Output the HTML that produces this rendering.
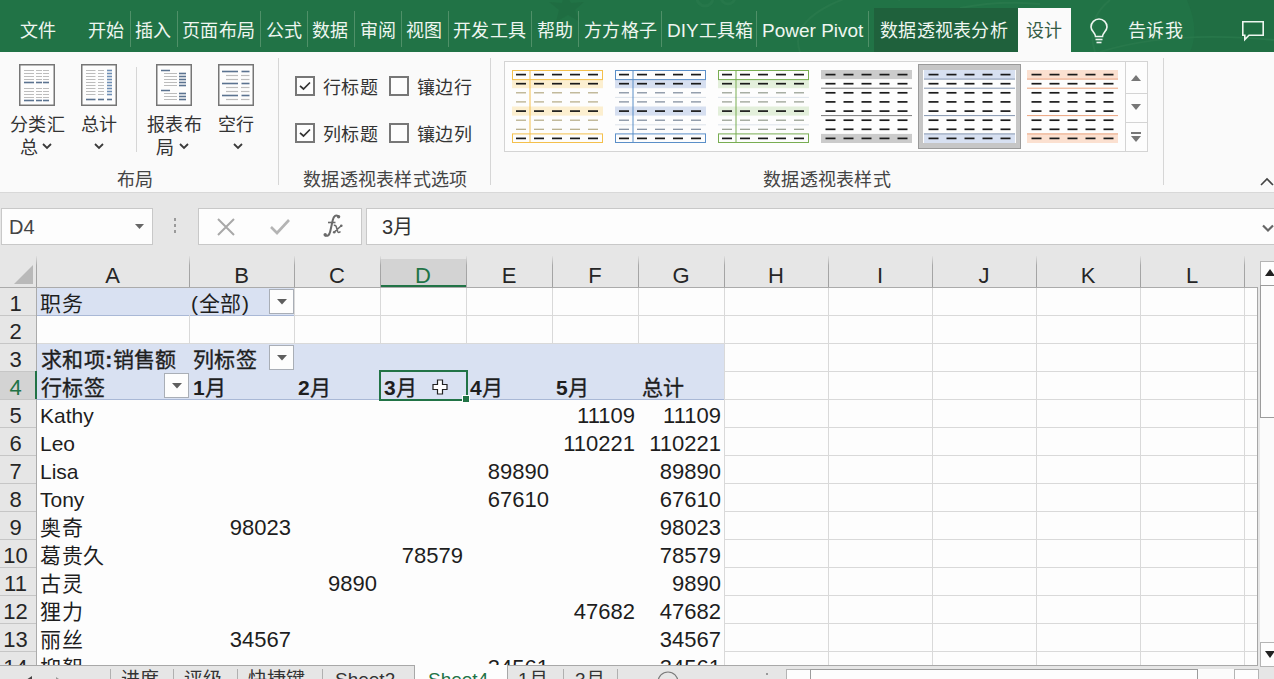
<!DOCTYPE html><html lang="zh-CN"><head><meta charset="utf-8"><title>Excel</title><style>
*{margin:0;padding:0;box-sizing:border-box}
html,body{width:1274px;height:679px;overflow:hidden;background:#fdfdfd;font-family:"Liberation Sans",sans-serif;color:#222}
div,span{position:absolute;white-space:nowrap}
span.i{position:static}
.tab{top:19px;font-size:18px;line-height:24px;letter-spacing:0.3px;color:#eef6f0}
.lat{position:static;font-size:19px;letter-spacing:0}
.tsep{top:11px;width:1px;height:36px;background:#4f9068}
.rl{font-size:18px;line-height:22px;letter-spacing:0.3px;color:#333}
.gl{font-size:18px;line-height:22px;letter-spacing:0.3px;color:#444}
.gsep{width:1px;background:#d6d6d6}
.ch{top:259px;height:28px;font-size:22px;line-height:33px;text-align:center;color:#262626}
.rh{left:0;width:31px;height:28px;font-size:22px;line-height:33px;text-align:center;color:#262626}
.c{font-size:21px;line-height:33px;height:28px;color:#1e1e1e;top:0}
.cj{letter-spacing:0.7px}
.num{font-size:22px}
.b{font-weight:bold}
.bm{font-weight:500;-webkit-text-stroke:0.35px #1e1e1e;letter-spacing:0.4px}
.bd{position:static;font-weight:bold}
svg{position:absolute;overflow:visible}
</style></head><body>
<div style="left:0;top:0;width:1274px;height:52px;background:#217346;overflow:hidden">
<svg width="1274" height="52" style="left:0;top:0" viewBox="0 0 1274 52"><polygon points="565,-8 571,3 584,2 575,10 580,22 568,15 556,22 559,10 549,2 562,3" fill="#1f6b40" opacity="0.7"/><circle cx="705" cy="-2" r="8" fill="none" stroke="#2a7a4c" stroke-width="3" opacity="0.6"/><circle cx="728" cy="-3" r="7" fill="none" stroke="#2a7a4c" stroke-width="3" opacity="0.6"/><path d="M1187 0 Q1200 30 1190 52 L1274 52 L1274 0 Z" fill="#1f6a41" opacity="0.6"/><g fill="none" stroke="#2b7b4e" stroke-width="2" opacity="0.7"><path d="M800 52 Q790 25 830 5 T900 0"/><path d="M1095 52 Q1085 20 1110 0"/><path d="M1100 52 Q1170 30 1274 40"/><path d="M960 8 Q1000 0 1040 4"/></g></svg>
<div class="tsep" style="left:130px"></div>
<div class="tsep" style="left:177px"></div>
<div class="tsep" style="left:260px"></div>
<div class="tsep" style="left:307px"></div>
<div class="tsep" style="left:354px"></div>
<div class="tsep" style="left:401px"></div>
<div class="tsep" style="left:448px"></div>
<div class="tsep" style="left:531px"></div>
<div class="tsep" style="left:578px"></div>
<div class="tsep" style="left:661px"></div>
<div class="tsep" style="left:756px"></div>
<div class="tsep" style="left:868px"></div>
<div class="tab" style="left:20px">文件</div>
<div class="tab" style="left:88px">开始</div>
<div class="tab" style="left:135px">插入</div>
<div class="tab" style="left:182px">页面布局</div>
<div class="tab" style="left:266px">公式</div>
<div class="tab" style="left:312px">数据</div>
<div class="tab" style="left:360px">审阅</div>
<div class="tab" style="left:406px">视图</div>
<div class="tab" style="left:453px">开发工具</div>
<div class="tab" style="left:537px">帮助</div>
<div class="tab" style="left:584px">方方格子</div>
<div class="tab" style="left:667px"><span class="lat">DIY</span><span class="i">工具箱</span></div>
<div class="tab" style="left:762px;font-size:19px;letter-spacing:0">Power Pivot</div>
<div style="left:874px;top:8px;width:144px;height:44px;background:#1f613c"></div>
<div class="tab" style="left:880px">数据透视表分析</div>
<div style="left:1018px;top:8px;width:53px;height:44px;background:#fafafa"></div>
<div class="tab" style="left:1026px;color:#355c45">设计</div>
<div class="tab" style="left:1128px">告诉我</div>
<svg width="20" height="26" style="left:1089px;top:19px" viewBox="0 0 20 26"><path d="M6.5 17.5 C6.5 14 2 12 2 8 A8 8 0 0 1 18 8 C18 12 13.5 14 13.5 17.5 Z" fill="none" stroke="#eef6f0" stroke-width="1.6"/><line x1="6.5" y1="20.5" x2="13.5" y2="20.5" stroke="#eef6f0" stroke-width="1.6"/><line x1="7.5" y1="23.5" x2="12.5" y2="23.5" stroke="#eef6f0" stroke-width="1.6"/></svg>
<svg width="24" height="22" style="left:1241px;top:20px" viewBox="0 0 24 22"><path d="M1.8 1.8 H22.2 V15.2 H8 L3.8 19.6 V15.2 H1.8 Z" fill="none" stroke="#eef6f0" stroke-width="1.6" stroke-linejoin="miter"/></svg>
</div>
<div style="left:0;top:52px;width:1274px;height:140px;background:#fafafa"></div>
<svg width="36" height="42" style="left:19px;top:64px" viewBox="0 0 36 42"><rect x="0.75" y="0.75" width="34.5" height="40.5" fill="#fdfdfd" stroke="#767676" stroke-width="1.5"/><line x1="5" y1="6.5" x2="15" y2="6.5" stroke="#bcbcbc" stroke-width="1"/><line x1="17" y1="6.5" x2="23" y2="6.5" stroke="#bcbcbc" stroke-width="1"/><line x1="24" y1="6.5" x2="30" y2="6.5" stroke="#bcbcbc" stroke-width="1"/><line x1="5" y1="9.5" x2="15" y2="9.5" stroke="#bcbcbc" stroke-width="1"/><line x1="17" y1="9.5" x2="23" y2="9.5" stroke="#bcbcbc" stroke-width="1"/><line x1="24" y1="9.5" x2="30" y2="9.5" stroke="#bcbcbc" stroke-width="1"/><line x1="5" y1="12.5" x2="15" y2="12.5" stroke="#bcbcbc" stroke-width="1"/><line x1="17" y1="12.5" x2="23" y2="12.5" stroke="#bcbcbc" stroke-width="1"/><line x1="24" y1="12.5" x2="30" y2="12.5" stroke="#bcbcbc" stroke-width="1"/><line x1="5" y1="15.5" x2="15" y2="15.5" stroke="#bcbcbc" stroke-width="1"/><line x1="17" y1="15.5" x2="23" y2="15.5" stroke="#bcbcbc" stroke-width="1"/><line x1="24" y1="15.5" x2="30" y2="15.5" stroke="#bcbcbc" stroke-width="1"/><line x1="5" y1="18.5" x2="15" y2="18.5" stroke="#5b7390" stroke-width="1.6"/><line x1="17" y1="18.5" x2="23" y2="18.5" stroke="#5b7390" stroke-width="1.6"/><line x1="24" y1="18.5" x2="30" y2="18.5" stroke="#5b7390" stroke-width="1.6"/><line x1="5" y1="24.5" x2="15" y2="24.5" stroke="#bcbcbc" stroke-width="1"/><line x1="17" y1="24.5" x2="23" y2="24.5" stroke="#bcbcbc" stroke-width="1"/><line x1="24" y1="24.5" x2="30" y2="24.5" stroke="#bcbcbc" stroke-width="1"/><line x1="5" y1="27.5" x2="15" y2="27.5" stroke="#bcbcbc" stroke-width="1"/><line x1="17" y1="27.5" x2="23" y2="27.5" stroke="#bcbcbc" stroke-width="1"/><line x1="24" y1="27.5" x2="30" y2="27.5" stroke="#bcbcbc" stroke-width="1"/><line x1="5" y1="30.5" x2="15" y2="30.5" stroke="#bcbcbc" stroke-width="1"/><line x1="17" y1="30.5" x2="23" y2="30.5" stroke="#bcbcbc" stroke-width="1"/><line x1="24" y1="30.5" x2="30" y2="30.5" stroke="#bcbcbc" stroke-width="1"/><line x1="5" y1="33.5" x2="15" y2="33.5" stroke="#bcbcbc" stroke-width="1"/><line x1="17" y1="33.5" x2="23" y2="33.5" stroke="#bcbcbc" stroke-width="1"/><line x1="24" y1="33.5" x2="30" y2="33.5" stroke="#bcbcbc" stroke-width="1"/><line x1="5" y1="36.5" x2="15" y2="36.5" stroke="#5b7390" stroke-width="1.6"/><line x1="17" y1="36.5" x2="23" y2="36.5" stroke="#5b7390" stroke-width="1.6"/><line x1="24" y1="36.5" x2="30" y2="36.5" stroke="#5b7390" stroke-width="1.6"/></svg>
<svg width="36" height="42" style="left:81px;top:64px" viewBox="0 0 36 42"><rect x="0.75" y="0.75" width="34.5" height="40.5" fill="#fdfdfd" stroke="#767676" stroke-width="1.5"/><line x1="5" y1="6.5" x2="14.5" y2="6.5" stroke="#bcbcbc" stroke-width="1"/><line x1="17" y1="6.5" x2="23" y2="6.5" stroke="#bcbcbc" stroke-width="1"/><line x1="26" y1="6.5" x2="31" y2="6.5" stroke="#6f8fb5" stroke-width="1.6"/><line x1="5" y1="9.5" x2="14.5" y2="9.5" stroke="#bcbcbc" stroke-width="1"/><line x1="17" y1="9.5" x2="23" y2="9.5" stroke="#bcbcbc" stroke-width="1"/><line x1="26" y1="9.5" x2="31" y2="9.5" stroke="#6f8fb5" stroke-width="1.6"/><line x1="5" y1="12.5" x2="14.5" y2="12.5" stroke="#bcbcbc" stroke-width="1"/><line x1="17" y1="12.5" x2="23" y2="12.5" stroke="#bcbcbc" stroke-width="1"/><line x1="26" y1="12.5" x2="31" y2="12.5" stroke="#6f8fb5" stroke-width="1.6"/><line x1="5" y1="15.5" x2="14.5" y2="15.5" stroke="#bcbcbc" stroke-width="1"/><line x1="17" y1="15.5" x2="23" y2="15.5" stroke="#bcbcbc" stroke-width="1"/><line x1="26" y1="15.5" x2="31" y2="15.5" stroke="#6f8fb5" stroke-width="1.6"/><line x1="5" y1="18.5" x2="14.5" y2="18.5" stroke="#bcbcbc" stroke-width="1"/><line x1="17" y1="18.5" x2="23" y2="18.5" stroke="#bcbcbc" stroke-width="1"/><line x1="26" y1="18.5" x2="31" y2="18.5" stroke="#6f8fb5" stroke-width="1.6"/><line x1="5" y1="21.5" x2="14.5" y2="21.5" stroke="#bcbcbc" stroke-width="1"/><line x1="17" y1="21.5" x2="23" y2="21.5" stroke="#bcbcbc" stroke-width="1"/><line x1="26" y1="21.5" x2="31" y2="21.5" stroke="#6f8fb5" stroke-width="1.6"/><line x1="5" y1="24.5" x2="14.5" y2="24.5" stroke="#bcbcbc" stroke-width="1"/><line x1="17" y1="24.5" x2="23" y2="24.5" stroke="#bcbcbc" stroke-width="1"/><line x1="26" y1="24.5" x2="31" y2="24.5" stroke="#6f8fb5" stroke-width="1.6"/><line x1="5" y1="27.5" x2="14.5" y2="27.5" stroke="#bcbcbc" stroke-width="1"/><line x1="17" y1="27.5" x2="23" y2="27.5" stroke="#bcbcbc" stroke-width="1"/><line x1="26" y1="27.5" x2="31" y2="27.5" stroke="#6f8fb5" stroke-width="1.6"/><line x1="5" y1="30.5" x2="14.5" y2="30.5" stroke="#bcbcbc" stroke-width="1"/><line x1="17" y1="30.5" x2="23" y2="30.5" stroke="#bcbcbc" stroke-width="1"/><line x1="26" y1="30.5" x2="31" y2="30.5" stroke="#6f8fb5" stroke-width="1.6"/><line x1="5" y1="35.5" x2="14.5" y2="35.5" stroke="#5b7390" stroke-width="1.6"/><line x1="17" y1="35.5" x2="23" y2="35.5" stroke="#5b7390" stroke-width="1.6"/><line x1="26" y1="35.5" x2="31" y2="35.5" stroke="#5b7390" stroke-width="1.6"/></svg>
<svg width="36" height="42" style="left:156px;top:64px" viewBox="0 0 36 42"><rect x="0.75" y="0.75" width="34.5" height="40.5" fill="#fdfdfd" stroke="#767676" stroke-width="1.5"/><line x1="5" y1="6.5" x2="14" y2="6.5" stroke="#5b7390" stroke-width="1.5"/><line x1="8" y1="9.5" x2="21" y2="9.5" stroke="#bcbcbc" stroke-width="1"/><line x1="23" y1="9.5" x2="30" y2="9.5" stroke="#5b7390" stroke-width="1.6"/><line x1="8" y1="12.5" x2="21" y2="12.5" stroke="#bcbcbc" stroke-width="1"/><line x1="23" y1="12.5" x2="30" y2="12.5" stroke="#5b7390" stroke-width="1.6"/><line x1="8" y1="15.5" x2="21" y2="15.5" stroke="#bcbcbc" stroke-width="1"/><line x1="23" y1="15.5" x2="30" y2="15.5" stroke="#5b7390" stroke-width="1.6"/><line x1="8" y1="18.5" x2="21" y2="18.5" stroke="#bcbcbc" stroke-width="1"/><line x1="23" y1="18.5" x2="30" y2="18.5" stroke="#5b7390" stroke-width="1.6"/><line x1="8" y1="21.5" x2="21" y2="21.5" stroke="#bcbcbc" stroke-width="1"/><line x1="23" y1="21.5" x2="30" y2="21.5" stroke="#5b7390" stroke-width="1.6"/><line x1="5" y1="26.5" x2="14" y2="26.5" stroke="#5b7390" stroke-width="1.5"/><line x1="8" y1="29.5" x2="21" y2="29.5" stroke="#bcbcbc" stroke-width="1"/><line x1="23" y1="29.5" x2="30" y2="29.5" stroke="#5b7390" stroke-width="1.6"/><line x1="8" y1="32.5" x2="21" y2="32.5" stroke="#bcbcbc" stroke-width="1"/><line x1="23" y1="32.5" x2="30" y2="32.5" stroke="#5b7390" stroke-width="1.6"/><line x1="8" y1="35.5" x2="21" y2="35.5" stroke="#bcbcbc" stroke-width="1"/><line x1="23" y1="35.5" x2="30" y2="35.5" stroke="#5b7390" stroke-width="1.6"/></svg>
<svg width="36" height="42" style="left:218px;top:64px" viewBox="0 0 36 42"><rect x="0.75" y="0.75" width="34.5" height="40.5" fill="#fdfdfd" stroke="#767676" stroke-width="1.5"/><line x1="4" y1="7.5" x2="20" y2="7.5" stroke="#5b7390" stroke-width="1.6"/><line x1="23.5" y1="7.5" x2="31.5" y2="7.5" stroke="#5b7390" stroke-width="1.6"/><line x1="8" y1="11.5" x2="20" y2="11.5" stroke="#bcbcbc" stroke-width="1.2"/><line x1="23" y1="11.5" x2="31.5" y2="11.5" stroke="#bcbcbc" stroke-width="1.2"/><line x1="8" y1="15.5" x2="20" y2="15.5" stroke="#bcbcbc" stroke-width="1.2"/><line x1="23" y1="15.5" x2="31.5" y2="15.5" stroke="#bcbcbc" stroke-width="1.2"/><line x1="4" y1="19.5" x2="20" y2="19.5" stroke="#5b7390" stroke-width="1.6"/><line x1="23.5" y1="19.5" x2="31.5" y2="19.5" stroke="#5b7390" stroke-width="1.6"/><line x1="8" y1="23.5" x2="20" y2="23.5" stroke="#bcbcbc" stroke-width="1.2"/><line x1="23" y1="23.5" x2="31.5" y2="23.5" stroke="#bcbcbc" stroke-width="1.2"/><line x1="8" y1="27.5" x2="20" y2="27.5" stroke="#bcbcbc" stroke-width="1.2"/><line x1="23" y1="27.5" x2="31.5" y2="27.5" stroke="#bcbcbc" stroke-width="1.2"/><line x1="4" y1="31.5" x2="20" y2="31.5" stroke="#5b7390" stroke-width="1.6"/><line x1="23.5" y1="31.5" x2="31.5" y2="31.5" stroke="#5b7390" stroke-width="1.6"/><line x1="8" y1="35.5" x2="20" y2="35.5" stroke="#bcbcbc" stroke-width="1.2"/><line x1="23" y1="35.5" x2="31.5" y2="35.5" stroke="#bcbcbc" stroke-width="1.2"/></svg>
<div class="rl" style="left:10px;top:114px">分类汇</div>
<div class="rl" style="left:20px;top:137px">总</div>
<svg width="10" height="7" style="left:42px;top:143px" viewBox="0 0 10 7"><polyline points="1,1 5.0,5 9,1" fill="none" stroke="#3a3a3a" stroke-width="1.8"/></svg>
<div class="rl" style="left:81px;top:114px">总计</div>
<svg width="10" height="7" style="left:94px;top:143px" viewBox="0 0 10 7"><polyline points="1,1 5.0,5 9,1" fill="none" stroke="#3a3a3a" stroke-width="1.8"/></svg>
<div class="gsep" style="left:136px;top:67px;height:85px"></div>
<div class="rl" style="left:147px;top:114px">报表布</div>
<div class="rl" style="left:156px;top:137px">局</div>
<svg width="10" height="7" style="left:179px;top:143px" viewBox="0 0 10 7"><polyline points="1,1 5.0,5 9,1" fill="none" stroke="#3a3a3a" stroke-width="1.8"/></svg>
<div class="rl" style="left:218px;top:114px">空行</div>
<svg width="10" height="7" style="left:233px;top:143px" viewBox="0 0 10 7"><polyline points="1,1 5.0,5 9,1" fill="none" stroke="#3a3a3a" stroke-width="1.8"/></svg>
<div class="gl" style="left:117px;top:169px">布局</div>
<div class="gsep" style="left:278px;top:58px;height:127px"></div>
<svg width="20" height="20" style="left:295px;top:76px" viewBox="0 0 20 20"><rect x="1" y="1" width="18" height="18" fill="#fdfdfd" stroke="#777" stroke-width="2"/><polyline points="5,9.8 8.5,13 15,6.5" fill="none" stroke="#333" stroke-width="1.7"/></svg>
<div class="rl" style="left:323px;top:77px">行标题</div>
<svg width="20" height="20" style="left:389px;top:76px" viewBox="0 0 20 20"><rect x="1" y="1" width="18" height="18" fill="#fdfdfd" stroke="#777" stroke-width="2"/></svg>
<div class="rl" style="left:417px;top:77px">镶边行</div>
<svg width="20" height="20" style="left:295px;top:123px" viewBox="0 0 20 20"><rect x="1" y="1" width="18" height="18" fill="#fdfdfd" stroke="#777" stroke-width="2"/><polyline points="5,9.8 8.5,13 15,6.5" fill="none" stroke="#333" stroke-width="1.7"/></svg>
<div class="rl" style="left:323px;top:124px">列标题</div>
<svg width="20" height="20" style="left:389px;top:123px" viewBox="0 0 20 20"><rect x="1" y="1" width="18" height="18" fill="#fdfdfd" stroke="#777" stroke-width="2"/></svg>
<div class="rl" style="left:417px;top:124px">镶边列</div>
<div class="gl" style="left:303px;top:169px">数据透视表样式选项</div>
<div class="gsep" style="left:490px;top:58px;height:127px"></div>
<div style="left:504px;top:61px;width:644px;height:91px;border:1px solid #d4d4d4;background:#fdfdfd"></div>
<svg width="91" height="73" style="left:512px;top:70px" viewBox="0 0 91 73"><rect x="0" y="9.1" width="91" height="9.1" fill="#fcefd0"/><rect x="0" y="36.5" width="91" height="9.1" fill="#fcefd0"/><rect x="0.5" y="0.5" width="90" height="9.1" fill="none" stroke="#f4c04c" stroke-width="1"/><rect x="0.5" y="63.9" width="90" height="8.6" fill="none" stroke="#f4c04c" stroke-width="1"/><line x1="18" y1="0" x2="18" y2="73" stroke="#f4c04c" stroke-width="1"/><line x1="4" y1="4.6" x2="14" y2="4.6" stroke="#1a1a1a" stroke-width="1.7"/><line x1="22" y1="4.6" x2="32" y2="4.6" stroke="#1a1a1a" stroke-width="1.7"/><line x1="40" y1="4.6" x2="50" y2="4.6" stroke="#1a1a1a" stroke-width="1.7"/><line x1="58" y1="4.6" x2="68" y2="4.6" stroke="#1a1a1a" stroke-width="1.7"/><line x1="76" y1="4.6" x2="86" y2="4.6" stroke="#1a1a1a" stroke-width="1.7"/><line x1="4" y1="13.7" x2="14" y2="13.7" stroke="#1a1a1a" stroke-width="1.7"/><line x1="22" y1="13.7" x2="32" y2="13.7" stroke="#1a1a1a" stroke-width="1.7"/><line x1="40" y1="13.7" x2="50" y2="13.7" stroke="#1a1a1a" stroke-width="1.7"/><line x1="58" y1="13.7" x2="68" y2="13.7" stroke="#1a1a1a" stroke-width="1.7"/><line x1="76" y1="13.7" x2="86" y2="13.7" stroke="#1a1a1a" stroke-width="1.7"/><line x1="4" y1="22.8" x2="14" y2="22.8" stroke="#b3a983" stroke-width="1.2"/><line x1="22" y1="22.8" x2="32" y2="22.8" stroke="#b3a983" stroke-width="1.2"/><line x1="40" y1="22.8" x2="50" y2="22.8" stroke="#b3a983" stroke-width="1.2"/><line x1="58" y1="22.8" x2="68" y2="22.8" stroke="#b3a983" stroke-width="1.2"/><line x1="76" y1="22.8" x2="86" y2="22.8" stroke="#b3a983" stroke-width="1.2"/><line x1="4" y1="31.9" x2="14" y2="31.9" stroke="#b3a983" stroke-width="1.2"/><line x1="22" y1="31.9" x2="32" y2="31.9" stroke="#b3a983" stroke-width="1.2"/><line x1="40" y1="31.9" x2="50" y2="31.9" stroke="#b3a983" stroke-width="1.2"/><line x1="58" y1="31.9" x2="68" y2="31.9" stroke="#b3a983" stroke-width="1.2"/><line x1="76" y1="31.9" x2="86" y2="31.9" stroke="#b3a983" stroke-width="1.2"/><line x1="4" y1="41.1" x2="14" y2="41.1" stroke="#1a1a1a" stroke-width="1.7"/><line x1="22" y1="41.1" x2="32" y2="41.1" stroke="#1a1a1a" stroke-width="1.7"/><line x1="40" y1="41.1" x2="50" y2="41.1" stroke="#1a1a1a" stroke-width="1.7"/><line x1="58" y1="41.1" x2="68" y2="41.1" stroke="#1a1a1a" stroke-width="1.7"/><line x1="76" y1="41.1" x2="86" y2="41.1" stroke="#1a1a1a" stroke-width="1.7"/><line x1="4" y1="50.2" x2="14" y2="50.2" stroke="#b3a983" stroke-width="1.2"/><line x1="22" y1="50.2" x2="32" y2="50.2" stroke="#b3a983" stroke-width="1.2"/><line x1="40" y1="50.2" x2="50" y2="50.2" stroke="#b3a983" stroke-width="1.2"/><line x1="58" y1="50.2" x2="68" y2="50.2" stroke="#b3a983" stroke-width="1.2"/><line x1="76" y1="50.2" x2="86" y2="50.2" stroke="#b3a983" stroke-width="1.2"/><line x1="4" y1="59.3" x2="14" y2="59.3" stroke="#b3a983" stroke-width="1.2"/><line x1="22" y1="59.3" x2="32" y2="59.3" stroke="#b3a983" stroke-width="1.2"/><line x1="40" y1="59.3" x2="50" y2="59.3" stroke="#b3a983" stroke-width="1.2"/><line x1="58" y1="59.3" x2="68" y2="59.3" stroke="#b3a983" stroke-width="1.2"/><line x1="76" y1="59.3" x2="86" y2="59.3" stroke="#b3a983" stroke-width="1.2"/><line x1="4" y1="68.4" x2="14" y2="68.4" stroke="#1a1a1a" stroke-width="1.7"/><line x1="22" y1="68.4" x2="32" y2="68.4" stroke="#1a1a1a" stroke-width="1.7"/><line x1="40" y1="68.4" x2="50" y2="68.4" stroke="#1a1a1a" stroke-width="1.7"/><line x1="58" y1="68.4" x2="68" y2="68.4" stroke="#1a1a1a" stroke-width="1.7"/><line x1="76" y1="68.4" x2="86" y2="68.4" stroke="#1a1a1a" stroke-width="1.7"/></svg>
<svg width="91" height="73" style="left:615px;top:70px" viewBox="0 0 91 73"><rect x="0" y="9.1" width="91" height="9.1" fill="#d6dff0"/><rect x="0" y="36.5" width="91" height="9.1" fill="#d6dff0"/><line x1="0" y1="27.4" x2="91" y2="27.4" stroke="#dde3ea" stroke-width="1"/><line x1="0" y1="54.8" x2="91" y2="54.8" stroke="#dde3ea" stroke-width="1"/><rect x="0.5" y="0.5" width="90" height="9.1" fill="none" stroke="#5b8fc8" stroke-width="1"/><rect x="0.5" y="63.9" width="90" height="8.6" fill="none" stroke="#5b8fc8" stroke-width="1"/><line x1="18" y1="0" x2="18" y2="73" stroke="#5b8fc8" stroke-width="1"/><line x1="4" y1="4.6" x2="14" y2="4.6" stroke="#1a1a1a" stroke-width="1.7"/><line x1="22" y1="4.6" x2="32" y2="4.6" stroke="#1a1a1a" stroke-width="1.7"/><line x1="40" y1="4.6" x2="50" y2="4.6" stroke="#1a1a1a" stroke-width="1.7"/><line x1="58" y1="4.6" x2="68" y2="4.6" stroke="#1a1a1a" stroke-width="1.7"/><line x1="76" y1="4.6" x2="86" y2="4.6" stroke="#1a1a1a" stroke-width="1.7"/><line x1="4" y1="13.7" x2="14" y2="13.7" stroke="#1a1a1a" stroke-width="1.7"/><line x1="22" y1="13.7" x2="32" y2="13.7" stroke="#1a1a1a" stroke-width="1.7"/><line x1="40" y1="13.7" x2="50" y2="13.7" stroke="#1a1a1a" stroke-width="1.7"/><line x1="58" y1="13.7" x2="68" y2="13.7" stroke="#1a1a1a" stroke-width="1.7"/><line x1="76" y1="13.7" x2="86" y2="13.7" stroke="#1a1a1a" stroke-width="1.7"/><line x1="4" y1="22.8" x2="14" y2="22.8" stroke="#7a8799" stroke-width="1.2"/><line x1="22" y1="22.8" x2="32" y2="22.8" stroke="#7a8799" stroke-width="1.2"/><line x1="40" y1="22.8" x2="50" y2="22.8" stroke="#7a8799" stroke-width="1.2"/><line x1="58" y1="22.8" x2="68" y2="22.8" stroke="#7a8799" stroke-width="1.2"/><line x1="76" y1="22.8" x2="86" y2="22.8" stroke="#7a8799" stroke-width="1.2"/><line x1="4" y1="31.9" x2="14" y2="31.9" stroke="#7a8799" stroke-width="1.2"/><line x1="22" y1="31.9" x2="32" y2="31.9" stroke="#7a8799" stroke-width="1.2"/><line x1="40" y1="31.9" x2="50" y2="31.9" stroke="#7a8799" stroke-width="1.2"/><line x1="58" y1="31.9" x2="68" y2="31.9" stroke="#7a8799" stroke-width="1.2"/><line x1="76" y1="31.9" x2="86" y2="31.9" stroke="#7a8799" stroke-width="1.2"/><line x1="4" y1="41.1" x2="14" y2="41.1" stroke="#1a1a1a" stroke-width="1.7"/><line x1="22" y1="41.1" x2="32" y2="41.1" stroke="#1a1a1a" stroke-width="1.7"/><line x1="40" y1="41.1" x2="50" y2="41.1" stroke="#1a1a1a" stroke-width="1.7"/><line x1="58" y1="41.1" x2="68" y2="41.1" stroke="#1a1a1a" stroke-width="1.7"/><line x1="76" y1="41.1" x2="86" y2="41.1" stroke="#1a1a1a" stroke-width="1.7"/><line x1="4" y1="50.2" x2="14" y2="50.2" stroke="#7a8799" stroke-width="1.2"/><line x1="22" y1="50.2" x2="32" y2="50.2" stroke="#7a8799" stroke-width="1.2"/><line x1="40" y1="50.2" x2="50" y2="50.2" stroke="#7a8799" stroke-width="1.2"/><line x1="58" y1="50.2" x2="68" y2="50.2" stroke="#7a8799" stroke-width="1.2"/><line x1="76" y1="50.2" x2="86" y2="50.2" stroke="#7a8799" stroke-width="1.2"/><line x1="4" y1="59.3" x2="14" y2="59.3" stroke="#7a8799" stroke-width="1.2"/><line x1="22" y1="59.3" x2="32" y2="59.3" stroke="#7a8799" stroke-width="1.2"/><line x1="40" y1="59.3" x2="50" y2="59.3" stroke="#7a8799" stroke-width="1.2"/><line x1="58" y1="59.3" x2="68" y2="59.3" stroke="#7a8799" stroke-width="1.2"/><line x1="76" y1="59.3" x2="86" y2="59.3" stroke="#7a8799" stroke-width="1.2"/><line x1="4" y1="68.4" x2="14" y2="68.4" stroke="#1a1a1a" stroke-width="1.7"/><line x1="22" y1="68.4" x2="32" y2="68.4" stroke="#1a1a1a" stroke-width="1.7"/><line x1="40" y1="68.4" x2="50" y2="68.4" stroke="#1a1a1a" stroke-width="1.7"/><line x1="58" y1="68.4" x2="68" y2="68.4" stroke="#1a1a1a" stroke-width="1.7"/><line x1="76" y1="68.4" x2="86" y2="68.4" stroke="#1a1a1a" stroke-width="1.7"/></svg>
<svg width="91" height="73" style="left:718px;top:70px" viewBox="0 0 91 73"><rect x="0" y="9.1" width="91" height="9.1" fill="#e3efdb"/><rect x="0" y="36.5" width="91" height="9.1" fill="#e3efdb"/><line x1="0" y1="27.4" x2="91" y2="27.4" stroke="#dde3ea" stroke-width="1"/><line x1="0" y1="54.8" x2="91" y2="54.8" stroke="#dde3ea" stroke-width="1"/><rect x="0.5" y="0.5" width="90" height="9.1" fill="none" stroke="#78ad52" stroke-width="1"/><rect x="0.5" y="63.9" width="90" height="8.6" fill="none" stroke="#78ad52" stroke-width="1"/><line x1="18" y1="0" x2="18" y2="73" stroke="#78ad52" stroke-width="1"/><line x1="4" y1="4.6" x2="14" y2="4.6" stroke="#1a1a1a" stroke-width="1.7"/><line x1="22" y1="4.6" x2="32" y2="4.6" stroke="#1a1a1a" stroke-width="1.7"/><line x1="40" y1="4.6" x2="50" y2="4.6" stroke="#1a1a1a" stroke-width="1.7"/><line x1="58" y1="4.6" x2="68" y2="4.6" stroke="#1a1a1a" stroke-width="1.7"/><line x1="76" y1="4.6" x2="86" y2="4.6" stroke="#1a1a1a" stroke-width="1.7"/><line x1="4" y1="13.7" x2="14" y2="13.7" stroke="#1a1a1a" stroke-width="1.7"/><line x1="22" y1="13.7" x2="32" y2="13.7" stroke="#1a1a1a" stroke-width="1.7"/><line x1="40" y1="13.7" x2="50" y2="13.7" stroke="#1a1a1a" stroke-width="1.7"/><line x1="58" y1="13.7" x2="68" y2="13.7" stroke="#1a1a1a" stroke-width="1.7"/><line x1="76" y1="13.7" x2="86" y2="13.7" stroke="#1a1a1a" stroke-width="1.7"/><line x1="4" y1="22.8" x2="14" y2="22.8" stroke="#929a8c" stroke-width="1.2"/><line x1="22" y1="22.8" x2="32" y2="22.8" stroke="#929a8c" stroke-width="1.2"/><line x1="40" y1="22.8" x2="50" y2="22.8" stroke="#929a8c" stroke-width="1.2"/><line x1="58" y1="22.8" x2="68" y2="22.8" stroke="#929a8c" stroke-width="1.2"/><line x1="76" y1="22.8" x2="86" y2="22.8" stroke="#929a8c" stroke-width="1.2"/><line x1="4" y1="31.9" x2="14" y2="31.9" stroke="#929a8c" stroke-width="1.2"/><line x1="22" y1="31.9" x2="32" y2="31.9" stroke="#929a8c" stroke-width="1.2"/><line x1="40" y1="31.9" x2="50" y2="31.9" stroke="#929a8c" stroke-width="1.2"/><line x1="58" y1="31.9" x2="68" y2="31.9" stroke="#929a8c" stroke-width="1.2"/><line x1="76" y1="31.9" x2="86" y2="31.9" stroke="#929a8c" stroke-width="1.2"/><line x1="4" y1="41.1" x2="14" y2="41.1" stroke="#1a1a1a" stroke-width="1.7"/><line x1="22" y1="41.1" x2="32" y2="41.1" stroke="#1a1a1a" stroke-width="1.7"/><line x1="40" y1="41.1" x2="50" y2="41.1" stroke="#1a1a1a" stroke-width="1.7"/><line x1="58" y1="41.1" x2="68" y2="41.1" stroke="#1a1a1a" stroke-width="1.7"/><line x1="76" y1="41.1" x2="86" y2="41.1" stroke="#1a1a1a" stroke-width="1.7"/><line x1="4" y1="50.2" x2="14" y2="50.2" stroke="#929a8c" stroke-width="1.2"/><line x1="22" y1="50.2" x2="32" y2="50.2" stroke="#929a8c" stroke-width="1.2"/><line x1="40" y1="50.2" x2="50" y2="50.2" stroke="#929a8c" stroke-width="1.2"/><line x1="58" y1="50.2" x2="68" y2="50.2" stroke="#929a8c" stroke-width="1.2"/><line x1="76" y1="50.2" x2="86" y2="50.2" stroke="#929a8c" stroke-width="1.2"/><line x1="4" y1="59.3" x2="14" y2="59.3" stroke="#929a8c" stroke-width="1.2"/><line x1="22" y1="59.3" x2="32" y2="59.3" stroke="#929a8c" stroke-width="1.2"/><line x1="40" y1="59.3" x2="50" y2="59.3" stroke="#929a8c" stroke-width="1.2"/><line x1="58" y1="59.3" x2="68" y2="59.3" stroke="#929a8c" stroke-width="1.2"/><line x1="76" y1="59.3" x2="86" y2="59.3" stroke="#929a8c" stroke-width="1.2"/><line x1="4" y1="68.4" x2="14" y2="68.4" stroke="#1a1a1a" stroke-width="1.7"/><line x1="22" y1="68.4" x2="32" y2="68.4" stroke="#1a1a1a" stroke-width="1.7"/><line x1="40" y1="68.4" x2="50" y2="68.4" stroke="#1a1a1a" stroke-width="1.7"/><line x1="58" y1="68.4" x2="68" y2="68.4" stroke="#1a1a1a" stroke-width="1.7"/><line x1="76" y1="68.4" x2="86" y2="68.4" stroke="#1a1a1a" stroke-width="1.7"/></svg>
<svg width="91" height="73" style="left:821px;top:70px" viewBox="0 0 91 73"><rect x="0" y="0" width="91" height="9.1" fill="#cbcbcb"/><rect x="0" y="63.9" width="91" height="9.1" fill="#cbcbcb"/><line x1="0" y1="18.2" x2="91" y2="18.2" stroke="#7a7a7a" stroke-width="1"/><line x1="0" y1="45.6" x2="91" y2="45.6" stroke="#7a7a7a" stroke-width="1"/><line x1="4.5" y1="4.6" x2="14.5" y2="4.6" stroke="#1a1a1a" stroke-width="1.7"/><line x1="22.5" y1="4.6" x2="32.5" y2="4.6" stroke="#1a1a1a" stroke-width="1.7"/><line x1="40.5" y1="4.6" x2="50.5" y2="4.6" stroke="#1a1a1a" stroke-width="1.7"/><line x1="58.5" y1="4.6" x2="68.5" y2="4.6" stroke="#1a1a1a" stroke-width="1.7"/><line x1="76.5" y1="4.6" x2="86.5" y2="4.6" stroke="#1a1a1a" stroke-width="1.7"/><line x1="4.5" y1="13.7" x2="14.5" y2="13.7" stroke="#1a1a1a" stroke-width="1.7"/><line x1="22.5" y1="13.7" x2="32.5" y2="13.7" stroke="#1a1a1a" stroke-width="1.7"/><line x1="40.5" y1="13.7" x2="50.5" y2="13.7" stroke="#1a1a1a" stroke-width="1.7"/><line x1="58.5" y1="13.7" x2="68.5" y2="13.7" stroke="#1a1a1a" stroke-width="1.7"/><line x1="76.5" y1="13.7" x2="86.5" y2="13.7" stroke="#1a1a1a" stroke-width="1.7"/><line x1="4.5" y1="22.8" x2="14.5" y2="22.8" stroke="#1a1a1a" stroke-width="1.7"/><line x1="22.5" y1="22.8" x2="32.5" y2="22.8" stroke="#1a1a1a" stroke-width="1.7"/><line x1="40.5" y1="22.8" x2="50.5" y2="22.8" stroke="#1a1a1a" stroke-width="1.7"/><line x1="58.5" y1="22.8" x2="68.5" y2="22.8" stroke="#1a1a1a" stroke-width="1.7"/><line x1="76.5" y1="22.8" x2="86.5" y2="22.8" stroke="#1a1a1a" stroke-width="1.7"/><line x1="4.5" y1="31.9" x2="14.5" y2="31.9" stroke="#1a1a1a" stroke-width="1.7"/><line x1="22.5" y1="31.9" x2="32.5" y2="31.9" stroke="#1a1a1a" stroke-width="1.7"/><line x1="40.5" y1="31.9" x2="50.5" y2="31.9" stroke="#1a1a1a" stroke-width="1.7"/><line x1="58.5" y1="31.9" x2="68.5" y2="31.9" stroke="#1a1a1a" stroke-width="1.7"/><line x1="76.5" y1="31.9" x2="86.5" y2="31.9" stroke="#1a1a1a" stroke-width="1.7"/><line x1="4.5" y1="41.1" x2="14.5" y2="41.1" stroke="#1a1a1a" stroke-width="1.7"/><line x1="22.5" y1="41.1" x2="32.5" y2="41.1" stroke="#1a1a1a" stroke-width="1.7"/><line x1="40.5" y1="41.1" x2="50.5" y2="41.1" stroke="#1a1a1a" stroke-width="1.7"/><line x1="58.5" y1="41.1" x2="68.5" y2="41.1" stroke="#1a1a1a" stroke-width="1.7"/><line x1="76.5" y1="41.1" x2="86.5" y2="41.1" stroke="#1a1a1a" stroke-width="1.7"/><line x1="4.5" y1="50.2" x2="14.5" y2="50.2" stroke="#1a1a1a" stroke-width="1.7"/><line x1="22.5" y1="50.2" x2="32.5" y2="50.2" stroke="#1a1a1a" stroke-width="1.7"/><line x1="40.5" y1="50.2" x2="50.5" y2="50.2" stroke="#1a1a1a" stroke-width="1.7"/><line x1="58.5" y1="50.2" x2="68.5" y2="50.2" stroke="#1a1a1a" stroke-width="1.7"/><line x1="76.5" y1="50.2" x2="86.5" y2="50.2" stroke="#1a1a1a" stroke-width="1.7"/><line x1="4.5" y1="59.3" x2="14.5" y2="59.3" stroke="#1a1a1a" stroke-width="1.7"/><line x1="22.5" y1="59.3" x2="32.5" y2="59.3" stroke="#1a1a1a" stroke-width="1.7"/><line x1="40.5" y1="59.3" x2="50.5" y2="59.3" stroke="#1a1a1a" stroke-width="1.7"/><line x1="58.5" y1="59.3" x2="68.5" y2="59.3" stroke="#1a1a1a" stroke-width="1.7"/><line x1="76.5" y1="59.3" x2="86.5" y2="59.3" stroke="#1a1a1a" stroke-width="1.7"/><line x1="4.5" y1="68.4" x2="14.5" y2="68.4" stroke="#1a1a1a" stroke-width="1.7"/><line x1="22.5" y1="68.4" x2="32.5" y2="68.4" stroke="#1a1a1a" stroke-width="1.7"/><line x1="40.5" y1="68.4" x2="50.5" y2="68.4" stroke="#1a1a1a" stroke-width="1.7"/><line x1="58.5" y1="68.4" x2="68.5" y2="68.4" stroke="#1a1a1a" stroke-width="1.7"/><line x1="76.5" y1="68.4" x2="86.5" y2="68.4" stroke="#1a1a1a" stroke-width="1.7"/></svg>
<div style="left:918px;top:64px;width:103px;height:85px;background:#c6c6c6;border:1px solid #9a9a9a"></div>
<div style="left:923px;top:70px;width:93px;height:73px;background:#fdfdfd"></div>
<svg width="91" height="73" style="left:924px;top:70px" viewBox="0 0 91 73"><rect x="0" y="0" width="91" height="9.1" fill="#d7e0f1"/><rect x="0" y="63.9" width="91" height="9.1" fill="#d7e0f1"/><line x1="0" y1="9.1" x2="91" y2="9.1" stroke="#8496b0" stroke-width="1"/><line x1="0" y1="18.2" x2="91" y2="18.2" stroke="#8496b0" stroke-width="1"/><line x1="0" y1="45.6" x2="91" y2="45.6" stroke="#8496b0" stroke-width="1"/><line x1="0" y1="63.9" x2="91" y2="63.9" stroke="#8496b0" stroke-width="1"/><line x1="4.5" y1="4.6" x2="14.5" y2="4.6" stroke="#1a1a1a" stroke-width="1.7"/><line x1="22.5" y1="4.6" x2="32.5" y2="4.6" stroke="#1a1a1a" stroke-width="1.7"/><line x1="40.5" y1="4.6" x2="50.5" y2="4.6" stroke="#1a1a1a" stroke-width="1.7"/><line x1="58.5" y1="4.6" x2="68.5" y2="4.6" stroke="#1a1a1a" stroke-width="1.7"/><line x1="76.5" y1="4.6" x2="86.5" y2="4.6" stroke="#1a1a1a" stroke-width="1.7"/><line x1="4.5" y1="13.7" x2="14.5" y2="13.7" stroke="#1a1a1a" stroke-width="1.7"/><line x1="22.5" y1="13.7" x2="32.5" y2="13.7" stroke="#1a1a1a" stroke-width="1.7"/><line x1="40.5" y1="13.7" x2="50.5" y2="13.7" stroke="#1a1a1a" stroke-width="1.7"/><line x1="58.5" y1="13.7" x2="68.5" y2="13.7" stroke="#1a1a1a" stroke-width="1.7"/><line x1="76.5" y1="13.7" x2="86.5" y2="13.7" stroke="#1a1a1a" stroke-width="1.7"/><line x1="4.5" y1="22.8" x2="14.5" y2="22.8" stroke="#1a1a1a" stroke-width="1.7"/><line x1="22.5" y1="22.8" x2="32.5" y2="22.8" stroke="#1a1a1a" stroke-width="1.7"/><line x1="40.5" y1="22.8" x2="50.5" y2="22.8" stroke="#1a1a1a" stroke-width="1.7"/><line x1="58.5" y1="22.8" x2="68.5" y2="22.8" stroke="#1a1a1a" stroke-width="1.7"/><line x1="76.5" y1="22.8" x2="86.5" y2="22.8" stroke="#1a1a1a" stroke-width="1.7"/><line x1="4.5" y1="31.9" x2="14.5" y2="31.9" stroke="#1a1a1a" stroke-width="1.7"/><line x1="22.5" y1="31.9" x2="32.5" y2="31.9" stroke="#1a1a1a" stroke-width="1.7"/><line x1="40.5" y1="31.9" x2="50.5" y2="31.9" stroke="#1a1a1a" stroke-width="1.7"/><line x1="58.5" y1="31.9" x2="68.5" y2="31.9" stroke="#1a1a1a" stroke-width="1.7"/><line x1="76.5" y1="31.9" x2="86.5" y2="31.9" stroke="#1a1a1a" stroke-width="1.7"/><line x1="4.5" y1="41.1" x2="14.5" y2="41.1" stroke="#1a1a1a" stroke-width="1.7"/><line x1="22.5" y1="41.1" x2="32.5" y2="41.1" stroke="#1a1a1a" stroke-width="1.7"/><line x1="40.5" y1="41.1" x2="50.5" y2="41.1" stroke="#1a1a1a" stroke-width="1.7"/><line x1="58.5" y1="41.1" x2="68.5" y2="41.1" stroke="#1a1a1a" stroke-width="1.7"/><line x1="76.5" y1="41.1" x2="86.5" y2="41.1" stroke="#1a1a1a" stroke-width="1.7"/><line x1="4.5" y1="50.2" x2="14.5" y2="50.2" stroke="#1a1a1a" stroke-width="1.7"/><line x1="22.5" y1="50.2" x2="32.5" y2="50.2" stroke="#1a1a1a" stroke-width="1.7"/><line x1="40.5" y1="50.2" x2="50.5" y2="50.2" stroke="#1a1a1a" stroke-width="1.7"/><line x1="58.5" y1="50.2" x2="68.5" y2="50.2" stroke="#1a1a1a" stroke-width="1.7"/><line x1="76.5" y1="50.2" x2="86.5" y2="50.2" stroke="#1a1a1a" stroke-width="1.7"/><line x1="4.5" y1="59.3" x2="14.5" y2="59.3" stroke="#1a1a1a" stroke-width="1.7"/><line x1="22.5" y1="59.3" x2="32.5" y2="59.3" stroke="#1a1a1a" stroke-width="1.7"/><line x1="40.5" y1="59.3" x2="50.5" y2="59.3" stroke="#1a1a1a" stroke-width="1.7"/><line x1="58.5" y1="59.3" x2="68.5" y2="59.3" stroke="#1a1a1a" stroke-width="1.7"/><line x1="76.5" y1="59.3" x2="86.5" y2="59.3" stroke="#1a1a1a" stroke-width="1.7"/><line x1="4.5" y1="68.4" x2="14.5" y2="68.4" stroke="#1a1a1a" stroke-width="1.7"/><line x1="22.5" y1="68.4" x2="32.5" y2="68.4" stroke="#1a1a1a" stroke-width="1.7"/><line x1="40.5" y1="68.4" x2="50.5" y2="68.4" stroke="#1a1a1a" stroke-width="1.7"/><line x1="58.5" y1="68.4" x2="68.5" y2="68.4" stroke="#1a1a1a" stroke-width="1.7"/><line x1="76.5" y1="68.4" x2="86.5" y2="68.4" stroke="#1a1a1a" stroke-width="1.7"/></svg>
<svg width="91" height="73" style="left:1027px;top:70px" viewBox="0 0 91 73"><rect x="0" y="0" width="91" height="9.1" fill="#fbe0d0"/><rect x="0" y="63.9" width="91" height="9.1" fill="#fbe0d0"/><line x1="0" y1="9.1" x2="91" y2="9.1" stroke="#eaa27c" stroke-width="1"/><line x1="0" y1="18.2" x2="91" y2="18.2" stroke="#eaa27c" stroke-width="1"/><line x1="0" y1="45.6" x2="91" y2="45.6" stroke="#eaa27c" stroke-width="1"/><line x1="0" y1="63.9" x2="91" y2="63.9" stroke="#eaa27c" stroke-width="1"/><line x1="4.5" y1="4.6" x2="14.5" y2="4.6" stroke="#1a1a1a" stroke-width="1.7"/><line x1="22.5" y1="4.6" x2="32.5" y2="4.6" stroke="#1a1a1a" stroke-width="1.7"/><line x1="40.5" y1="4.6" x2="50.5" y2="4.6" stroke="#1a1a1a" stroke-width="1.7"/><line x1="58.5" y1="4.6" x2="68.5" y2="4.6" stroke="#1a1a1a" stroke-width="1.7"/><line x1="76.5" y1="4.6" x2="86.5" y2="4.6" stroke="#1a1a1a" stroke-width="1.7"/><line x1="4.5" y1="13.7" x2="14.5" y2="13.7" stroke="#1a1a1a" stroke-width="1.7"/><line x1="22.5" y1="13.7" x2="32.5" y2="13.7" stroke="#1a1a1a" stroke-width="1.7"/><line x1="40.5" y1="13.7" x2="50.5" y2="13.7" stroke="#1a1a1a" stroke-width="1.7"/><line x1="58.5" y1="13.7" x2="68.5" y2="13.7" stroke="#1a1a1a" stroke-width="1.7"/><line x1="76.5" y1="13.7" x2="86.5" y2="13.7" stroke="#1a1a1a" stroke-width="1.7"/><line x1="4.5" y1="22.8" x2="14.5" y2="22.8" stroke="#1a1a1a" stroke-width="1.7"/><line x1="22.5" y1="22.8" x2="32.5" y2="22.8" stroke="#1a1a1a" stroke-width="1.7"/><line x1="40.5" y1="22.8" x2="50.5" y2="22.8" stroke="#1a1a1a" stroke-width="1.7"/><line x1="58.5" y1="22.8" x2="68.5" y2="22.8" stroke="#1a1a1a" stroke-width="1.7"/><line x1="76.5" y1="22.8" x2="86.5" y2="22.8" stroke="#1a1a1a" stroke-width="1.7"/><line x1="4.5" y1="31.9" x2="14.5" y2="31.9" stroke="#1a1a1a" stroke-width="1.7"/><line x1="22.5" y1="31.9" x2="32.5" y2="31.9" stroke="#1a1a1a" stroke-width="1.7"/><line x1="40.5" y1="31.9" x2="50.5" y2="31.9" stroke="#1a1a1a" stroke-width="1.7"/><line x1="58.5" y1="31.9" x2="68.5" y2="31.9" stroke="#1a1a1a" stroke-width="1.7"/><line x1="76.5" y1="31.9" x2="86.5" y2="31.9" stroke="#1a1a1a" stroke-width="1.7"/><line x1="4.5" y1="41.1" x2="14.5" y2="41.1" stroke="#1a1a1a" stroke-width="1.7"/><line x1="22.5" y1="41.1" x2="32.5" y2="41.1" stroke="#1a1a1a" stroke-width="1.7"/><line x1="40.5" y1="41.1" x2="50.5" y2="41.1" stroke="#1a1a1a" stroke-width="1.7"/><line x1="58.5" y1="41.1" x2="68.5" y2="41.1" stroke="#1a1a1a" stroke-width="1.7"/><line x1="76.5" y1="41.1" x2="86.5" y2="41.1" stroke="#1a1a1a" stroke-width="1.7"/><line x1="4.5" y1="50.2" x2="14.5" y2="50.2" stroke="#1a1a1a" stroke-width="1.7"/><line x1="22.5" y1="50.2" x2="32.5" y2="50.2" stroke="#1a1a1a" stroke-width="1.7"/><line x1="40.5" y1="50.2" x2="50.5" y2="50.2" stroke="#1a1a1a" stroke-width="1.7"/><line x1="58.5" y1="50.2" x2="68.5" y2="50.2" stroke="#1a1a1a" stroke-width="1.7"/><line x1="76.5" y1="50.2" x2="86.5" y2="50.2" stroke="#1a1a1a" stroke-width="1.7"/><line x1="4.5" y1="59.3" x2="14.5" y2="59.3" stroke="#1a1a1a" stroke-width="1.7"/><line x1="22.5" y1="59.3" x2="32.5" y2="59.3" stroke="#1a1a1a" stroke-width="1.7"/><line x1="40.5" y1="59.3" x2="50.5" y2="59.3" stroke="#1a1a1a" stroke-width="1.7"/><line x1="58.5" y1="59.3" x2="68.5" y2="59.3" stroke="#1a1a1a" stroke-width="1.7"/><line x1="76.5" y1="59.3" x2="86.5" y2="59.3" stroke="#1a1a1a" stroke-width="1.7"/><line x1="4.5" y1="68.4" x2="14.5" y2="68.4" stroke="#1a1a1a" stroke-width="1.7"/><line x1="22.5" y1="68.4" x2="32.5" y2="68.4" stroke="#1a1a1a" stroke-width="1.7"/><line x1="40.5" y1="68.4" x2="50.5" y2="68.4" stroke="#1a1a1a" stroke-width="1.7"/><line x1="58.5" y1="68.4" x2="68.5" y2="68.4" stroke="#1a1a1a" stroke-width="1.7"/><line x1="76.5" y1="68.4" x2="86.5" y2="68.4" stroke="#1a1a1a" stroke-width="1.7"/></svg>
<div style="left:1125px;top:61px;width:23px;height:91px;border:1px solid #d4d4d4;background:#fdfdfd"></div>
<div style="left:1125px;top:93px;width:23px;height:1px;background:#d4d4d4"></div>
<div style="left:1125px;top:122px;width:23px;height:1px;background:#d4d4d4"></div>
<svg width="10" height="6" style="left:1131px;top:75px" viewBox="0 0 10 6"><polygon points="0,6 10,6 5,0" fill="#777"/></svg>
<svg width="10" height="6" style="left:1131px;top:104px" viewBox="0 0 10 6"><polygon points="0,0 10,0 5,6" fill="#777"/></svg>
<div style="left:1131px;top:132px;width:10px;height:1.5px;background:#777"></div>
<svg width="10" height="6" style="left:1131px;top:136px" viewBox="0 0 10 6"><polygon points="0,0 10,0 5,6" fill="#777"/></svg>
<div class="gl" style="left:763px;top:169px">数据透视表样式</div>
<div class="gsep" style="left:1163px;top:58px;height:127px"></div>
<svg width="14" height="9" style="left:1260px;top:177px" viewBox="0 0 14 9"><polyline points="1,8 7,2 13,8" fill="none" stroke="#444" stroke-width="1.6"/></svg>
<div style="left:0;top:192px;width:1274px;height:95px;background:#e6e6e6;border-top:1px solid #d8d8d8"></div>
<div style="left:1px;top:208px;width:152px;height:37px;background:#fdfdfd;border:1px solid #c8c8c8"></div>
<div style="left:9px;top:215px;font-size:20px;line-height:24px;color:#444">D4</div>
<svg width="9" height="5" style="left:135px;top:224px" viewBox="0 0 9 5"><polygon points="0,0 9,0 4.5,5" fill="#666"/></svg>
<div style="left:174px;top:218px;width:2px;height:3px;background:#9a9a9a"></div>
<div style="left:174px;top:224px;width:2px;height:3px;background:#9a9a9a"></div>
<div style="left:174px;top:230px;width:2px;height:3px;background:#9a9a9a"></div>
<div style="left:198px;top:208px;width:164px;height:37px;background:#fdfdfd;border:1px solid #c8c8c8"></div>
<svg width="18" height="18" style="left:217px;top:218px" viewBox="0 0 18 18"><path d="M1 1 L17 17 M17 1 L1 17" stroke="#a8a8a8" stroke-width="2"/></svg>
<svg width="20" height="16" style="left:270px;top:219px" viewBox="0 0 20 16"><polyline points="1,8 7,14 19,1" fill="none" stroke="#b4b4b4" stroke-width="2.6"/></svg>
<svg width="24" height="26" style="left:320px;top:212px" viewBox="0 0 24 26"><path d="M18.5 4.5 C16 2.5 13.8 3.5 12.8 8 L10.2 19.5 C9.3 23.5 7.5 24.5 5 23.5" fill="none" stroke="#6a6a6a" stroke-width="2"/><circle cx="18.6" cy="4.8" r="1.7" fill="#6a6a6a"/><circle cx="5.2" cy="22.8" r="1.7" fill="#6a6a6a"/><path d="M8 10.5 H15.5" stroke="#6a6a6a" stroke-width="1.6"/><path d="M13.8 13.5 C15.5 12.8 16.2 14 16.8 16.5 L17.6 19.5 C18.2 21 19.5 20.5 20.5 19.5 M21.5 13.5 L13.8 20.5" fill="none" stroke="#6a6a6a" stroke-width="1.6"/><circle cx="21.3" cy="13.8" r="1.3" fill="#6a6a6a"/><circle cx="14.2" cy="20.2" r="1.3" fill="#6a6a6a"/></svg>
<div style="left:366px;top:208px;width:910px;height:37px;background:#fdfdfd;border:1px solid #c8c8c8;border-right:none"></div>
<div style="left:382px;top:215px;font-size:20px;line-height:24px;color:#333">3<span class="i">月</span></div>
<svg width="12" height="8" style="left:1262px;top:224px" viewBox="0 0 12 8"><polyline points="1,1.5 6,6.5 11,1.5" fill="none" stroke="#666" stroke-width="2.2"/></svg>
<div style="left:0;top:259px;width:1274px;height:28px;background:#e6e6e6"></div>
<svg width="20" height="20" style="left:14px;top:265px" viewBox="0 0 20 20"><polygon points="19,0 19,19 0,19" fill="#b9b9b9"/></svg>
<div style="left:380px;top:259px;width:86px;height:28px;background:#d3d3d3"></div>
<div style="left:380px;top:285px;width:87px;height:2px;background:#217346"></div>
<div style="left:36px;top:256px;width:1px;height:31px;background:linear-gradient(#e0e0e0,#a8a8a8 30%,#a0a0a0)"></div>
<div style="left:189px;top:256px;width:1px;height:31px;background:linear-gradient(#e0e0e0,#a8a8a8 30%,#a0a0a0)"></div>
<div class="ch" style="left:36px;width:153px;color:#262626">A</div>
<div style="left:294px;top:256px;width:1px;height:31px;background:linear-gradient(#e0e0e0,#a8a8a8 30%,#a0a0a0)"></div>
<div class="ch" style="left:189px;width:105px;color:#262626">B</div>
<div style="left:380px;top:256px;width:1px;height:31px;background:linear-gradient(#e0e0e0,#a8a8a8 30%,#a0a0a0)"></div>
<div class="ch" style="left:294px;width:86px;color:#262626">C</div>
<div style="left:466px;top:256px;width:1px;height:31px;background:linear-gradient(#e0e0e0,#a8a8a8 30%,#a0a0a0)"></div>
<div class="ch" style="left:380px;width:86px;color:#217346">D</div>
<div style="left:552px;top:256px;width:1px;height:31px;background:linear-gradient(#e0e0e0,#a8a8a8 30%,#a0a0a0)"></div>
<div class="ch" style="left:466px;width:86px;color:#262626">E</div>
<div style="left:638px;top:256px;width:1px;height:31px;background:linear-gradient(#e0e0e0,#a8a8a8 30%,#a0a0a0)"></div>
<div class="ch" style="left:552px;width:86px;color:#262626">F</div>
<div style="left:724px;top:256px;width:1px;height:31px;background:linear-gradient(#e0e0e0,#a8a8a8 30%,#a0a0a0)"></div>
<div class="ch" style="left:638px;width:86px;color:#262626">G</div>
<div style="left:828px;top:256px;width:1px;height:31px;background:linear-gradient(#e0e0e0,#a8a8a8 30%,#a0a0a0)"></div>
<div class="ch" style="left:724px;width:104px;color:#262626">H</div>
<div style="left:932px;top:256px;width:1px;height:31px;background:linear-gradient(#e0e0e0,#a8a8a8 30%,#a0a0a0)"></div>
<div class="ch" style="left:828px;width:104px;color:#262626">I</div>
<div style="left:1036px;top:256px;width:1px;height:31px;background:linear-gradient(#e0e0e0,#a8a8a8 30%,#a0a0a0)"></div>
<div class="ch" style="left:932px;width:104px;color:#262626">J</div>
<div style="left:1140px;top:256px;width:1px;height:31px;background:linear-gradient(#e0e0e0,#a8a8a8 30%,#a0a0a0)"></div>
<div class="ch" style="left:1036px;width:104px;color:#262626">K</div>
<div style="left:1244px;top:256px;width:1px;height:31px;background:linear-gradient(#e0e0e0,#a8a8a8 30%,#a0a0a0)"></div>
<div class="ch" style="left:1140px;width:104px;color:#262626">L</div>
<div style="left:1348px;top:256px;width:1px;height:31px;background:linear-gradient(#e0e0e0,#a8a8a8 30%,#a0a0a0)"></div>
<div style="left:0;top:287px;width:36px;height:378px;background:#e6e6e6"></div>
<div style="left:36px;top:287px;width:1px;height:378px;background:#ababab"></div>
<div style="left:37px;top:287px;width:1220px;height:378px;background:#fdfdfd;overflow:hidden" id="grid">
<div style="left:0;top:0;width:257px;height:28px;background:#d9e1f2"></div>
<div style="left:0;top:56px;width:687px;height:56px;background:#d9e1f2"></div>
<div style="left:257px;top:28px;width:963px;height:1px;background:#d9d9d9"></div>
<div style="left:0px;top:56px;width:1220px;height:1px;background:#d9d9d9"></div>
<div style="left:687px;top:84px;width:533px;height:1px;background:#d9d9d9"></div>
<div style="left:687px;top:112px;width:533px;height:1px;background:#d9d9d9"></div>
<div style="left:687px;top:140px;width:533px;height:1px;background:#d9d9d9"></div>
<div style="left:687px;top:168px;width:533px;height:1px;background:#d9d9d9"></div>
<div style="left:687px;top:196px;width:533px;height:1px;background:#d9d9d9"></div>
<div style="left:687px;top:224px;width:533px;height:1px;background:#d9d9d9"></div>
<div style="left:687px;top:252px;width:533px;height:1px;background:#d9d9d9"></div>
<div style="left:687px;top:280px;width:533px;height:1px;background:#d9d9d9"></div>
<div style="left:687px;top:308px;width:533px;height:1px;background:#d9d9d9"></div>
<div style="left:687px;top:336px;width:533px;height:1px;background:#d9d9d9"></div>
<div style="left:687px;top:364px;width:533px;height:1px;background:#d9d9d9"></div>
<div style="left:687px;top:392px;width:533px;height:1px;background:#d9d9d9"></div>
<div style="left:0px;top:112px;width:687px;height:1px;background:#a9b8d6"></div>
<div style="left:0px;top:28px;width:257px;height:1px;background:#a9b8d6"></div>
<div style="left:152px;top:28px;width:1px;height:28px;background:#d9d9d9"></div>
<div style="left:257px;top:0px;width:1px;height:56px;background:#d9d9d9"></div>
<div style="left:343px;top:0px;width:1px;height:56px;background:#d9d9d9"></div>
<div style="left:429px;top:0px;width:1px;height:56px;background:#d9d9d9"></div>
<div style="left:515px;top:0px;width:1px;height:56px;background:#d9d9d9"></div>
<div style="left:601px;top:0px;width:1px;height:56px;background:#d9d9d9"></div>
<div style="left:687px;top:0px;width:1px;height:378px;background:#d9d9d9"></div>
<div style="left:791px;top:0px;width:1px;height:378px;background:#d9d9d9"></div>
<div style="left:895px;top:0px;width:1px;height:378px;background:#d9d9d9"></div>
<div style="left:999px;top:0px;width:1px;height:378px;background:#d9d9d9"></div>
<div style="left:1103px;top:0px;width:1px;height:378px;background:#d9d9d9"></div>
<div style="left:1207px;top:0px;width:1px;height:378px;background:#d9d9d9"></div>
<div class="c cj" style="left:3px;top:0px;color:#1e1e1e">职务</div>
<div class="c cj" style="left:154px;top:0px;color:#1e1e1e">(全部)</div>
<div class="c bm" style="left:4px;top:56px;color:#1e1e1e">求和项<span class="bd">:</span>销售额</div>
<div class="c bm" style="left:156px;top:56px;color:#1e1e1e">列标签</div>
<div class="c bm" style="left:4px;top:84px;color:#1e1e1e">行标签</div>
<div class="c bm" style="left:156px;top:84px;color:#1e1e1e"><span class="bd" style="-webkit-text-stroke:0">1</span>月</div>
<div class="c bm" style="left:261px;top:84px;color:#1e1e1e"><span class="bd" style="-webkit-text-stroke:0">2</span>月</div>
<div class="c bm" style="left:347px;top:84px;color:#1e1e1e"><span class="bd" style="-webkit-text-stroke:0">3</span>月</div>
<div class="c bm" style="left:433px;top:84px;color:#1e1e1e"><span class="bd" style="-webkit-text-stroke:0">4</span>月</div>
<div class="c bm" style="left:519px;top:84px;color:#1e1e1e"><span class="bd" style="-webkit-text-stroke:0">5</span>月</div>
<div class="c bm" style="left:605px;top:84px;color:#1e1e1e">总计</div>
<div class="c" style="left:3px;top:112px;color:#1e1e1e">Kathy</div>
<div class="c num" style="left:515px;top:112px;width:83px;text-align:right;color:#1e1e1e">11109</div>
<div class="c num" style="left:601px;top:112px;width:83px;text-align:right;color:#1e1e1e">11109</div>
<div class="c" style="left:3px;top:140px;color:#1e1e1e">Leo</div>
<div class="c num" style="left:515px;top:140px;width:83px;text-align:right;color:#1e1e1e">110221</div>
<div class="c num" style="left:601px;top:140px;width:83px;text-align:right;color:#1e1e1e">110221</div>
<div class="c" style="left:3px;top:168px;color:#1e1e1e">Lisa</div>
<div class="c num" style="left:429px;top:168px;width:83px;text-align:right;color:#1e1e1e">89890</div>
<div class="c num" style="left:601px;top:168px;width:83px;text-align:right;color:#1e1e1e">89890</div>
<div class="c" style="left:3px;top:196px;color:#1e1e1e">Tony</div>
<div class="c num" style="left:429px;top:196px;width:83px;text-align:right;color:#1e1e1e">67610</div>
<div class="c num" style="left:601px;top:196px;width:83px;text-align:right;color:#1e1e1e">67610</div>
<div class="c cj" style="left:3px;top:224px;color:#1e1e1e">奥奇</div>
<div class="c num" style="left:152px;top:224px;width:102px;text-align:right;color:#1e1e1e">98023</div>
<div class="c num" style="left:601px;top:224px;width:83px;text-align:right;color:#1e1e1e">98023</div>
<div class="c cj" style="left:3px;top:252px;color:#1e1e1e">葛贵久</div>
<div class="c num" style="left:343px;top:252px;width:83px;text-align:right;color:#1e1e1e">78579</div>
<div class="c num" style="left:601px;top:252px;width:83px;text-align:right;color:#1e1e1e">78579</div>
<div class="c cj" style="left:3px;top:280px;color:#1e1e1e">古灵</div>
<div class="c num" style="left:257px;top:280px;width:83px;text-align:right;color:#1e1e1e">9890</div>
<div class="c num" style="left:601px;top:280px;width:83px;text-align:right;color:#1e1e1e">9890</div>
<div class="c cj" style="left:3px;top:308px;color:#1e1e1e">狸力</div>
<div class="c num" style="left:515px;top:308px;width:83px;text-align:right;color:#1e1e1e">47682</div>
<div class="c num" style="left:601px;top:308px;width:83px;text-align:right;color:#1e1e1e">47682</div>
<div class="c cj" style="left:3px;top:336px;color:#1e1e1e">丽丝</div>
<div class="c num" style="left:152px;top:336px;width:102px;text-align:right;color:#1e1e1e">34567</div>
<div class="c num" style="left:601px;top:336px;width:83px;text-align:right;color:#1e1e1e">34567</div>
<div class="c cj" style="left:3px;top:364px;color:#1e1e1e">枊絮</div>
<div class="c num" style="left:429px;top:364px;width:83px;text-align:right;color:#1e1e1e">34561</div>
<div class="c num" style="left:601px;top:364px;width:83px;text-align:right;color:#1e1e1e">34561</div>
<div style="left:232px;top:2px;width:25px;height:25px;background:#fdfdfd;border:1px solid #a9aeb6"></div><svg width="10" height="6" style="left:240px;top:12px" viewBox="0 0 10 6"><polygon points="0,0 10,0 5,5.5" fill="#5e5e5e"/></svg>
<div style="left:232px;top:58px;width:25px;height:25px;background:#fdfdfd;border:1px solid #a9aeb6"></div><svg width="10" height="6" style="left:240px;top:68px" viewBox="0 0 10 6"><polygon points="0,0 10,0 5,5.5" fill="#5e5e5e"/></svg>
<div style="left:127px;top:86px;width:25px;height:25px;background:#fdfdfd;border:1px solid #a9aeb6"></div><svg width="10" height="6" style="left:135px;top:96px" viewBox="0 0 10 6"><polygon points="0,0 10,0 5,5.5" fill="#5e5e5e"/></svg>
<div style="left:342px;top:83px;width:89px;height:31px;border:2px solid #217346"></div>
<div style="left:425px;top:108px;width:8px;height:8px;background:#217346;border:1px solid #fdfdfd"></div>
<svg width="16" height="16" style="left:395px;top:92px" viewBox="0 0 16 16"><path d="M5.5 1 H10.5 V5.5 H15 V10.5 H10.5 V15 H5.5 V10.5 H1 V5.5 H5.5 Z" fill="#fff" stroke="#222" stroke-width="1.2"/></svg>
</div>
<div style="left:0;top:287px;width:1257px;height:1px;background:#ababab"></div>
<div style="left:1257px;top:287px;width:1px;height:379px;background:#a6a6a6"></div>
<div style="left:0;top:371px;width:36px;height:28px;background:#d3d3d3"></div>
<div class="rh" style="top:287px;color:#262626">1</div>
<div style="left:0;top:315px;width:36px;height:1px;background:#c6c6c6"></div>
<div class="rh" style="top:315px;color:#262626">2</div>
<div style="left:0;top:343px;width:36px;height:1px;background:#c6c6c6"></div>
<div class="rh" style="top:343px;color:#262626">3</div>
<div style="left:0;top:371px;width:36px;height:1px;background:#c6c6c6"></div>
<div class="rh" style="top:371px;color:#217346">4</div>
<div style="left:0;top:399px;width:36px;height:1px;background:#c6c6c6"></div>
<div class="rh" style="top:399px;color:#262626">5</div>
<div style="left:0;top:427px;width:36px;height:1px;background:#c6c6c6"></div>
<div class="rh" style="top:427px;color:#262626">6</div>
<div style="left:0;top:455px;width:36px;height:1px;background:#c6c6c6"></div>
<div class="rh" style="top:455px;color:#262626">7</div>
<div style="left:0;top:483px;width:36px;height:1px;background:#c6c6c6"></div>
<div class="rh" style="top:483px;color:#262626">8</div>
<div style="left:0;top:511px;width:36px;height:1px;background:#c6c6c6"></div>
<div class="rh" style="top:511px;color:#262626">9</div>
<div style="left:0;top:539px;width:36px;height:1px;background:#c6c6c6"></div>
<div class="rh" style="top:539px;color:#262626">10</div>
<div style="left:0;top:567px;width:36px;height:1px;background:#c6c6c6"></div>
<div class="rh" style="top:567px;color:#262626">11</div>
<div style="left:0;top:595px;width:36px;height:1px;background:#c6c6c6"></div>
<div class="rh" style="top:595px;color:#262626">12</div>
<div style="left:0;top:623px;width:36px;height:1px;background:#c6c6c6"></div>
<div class="rh" style="top:623px;color:#262626">13</div>
<div style="left:0;top:651px;width:36px;height:1px;background:#c6c6c6"></div>
<div class="rh" style="top:651px;color:#262626">14</div>
<div style="left:0;top:679px;width:36px;height:1px;background:#c6c6c6"></div>
<div style="left:35px;top:371px;width:2px;height:28px;background:#217346"></div>
<div style="left:1258px;top:259px;width:16px;height:420px;background:#e6e6e6"></div>
<div style="left:1260px;top:261px;width:16px;height:25px;background:#fdfdfd;border:1px solid #b4b4b4"></div>
<svg width="10" height="7" style="left:1265px;top:269px" viewBox="0 0 10 7"><polygon points="0,7 10,7 5,0" fill="#222"/></svg>
<div style="left:1260px;top:285px;width:16px;height:133px;background:#fdfdfd;border:1px solid #9c9c9c"></div>
<div style="left:1260px;top:418px;width:16px;height:224px;background:#fbfbfb"></div>
<div style="left:1260px;top:642px;width:16px;height:25px;background:#fdfdfd;border:1px solid #b4b4b4"></div>
<svg width="10" height="7" style="left:1265px;top:651px" viewBox="0 0 10 7"><polygon points="0,0 10,0 5,7" fill="#222"/></svg>
<div style="left:0;top:665px;width:1260px;height:14px;background:#e6e6e6"></div>
<div style="left:0;top:665px;width:1258px;height:1px;background:#a8a8a8"></div>
<div style="left:110px;top:669px;width:1px;height:14px;background:#b0b0b0"></div>
<div style="left:173px;top:669px;width:1px;height:14px;background:#b0b0b0"></div>
<div style="left:237px;top:669px;width:1px;height:14px;background:#b0b0b0"></div>
<div style="left:322px;top:669px;width:1px;height:14px;background:#b0b0b0"></div>
<div style="left:563px;top:669px;width:1px;height:14px;background:#b0b0b0"></div>
<div style="left:617px;top:669px;width:1px;height:14px;background:#b0b0b0"></div>
<div style="left:414px;top:665px;width:94px;height:14px;background:#fdfdfd;border-left:1px solid #a8a8a8;border-right:1px solid #a8a8a8"></div>
<div style="left:121px;top:668px;font-size:19px;line-height:24px;color:#333">进度</div>
<div style="left:184px;top:668px;font-size:19px;line-height:24px;color:#333">评级</div>
<div style="left:248px;top:668px;font-size:19px;line-height:24px;color:#333">快捷键</div>
<div style="left:335px;top:668px;font-size:19px;line-height:24px;color:#333">Sheet2</div>
<div style="left:428px;top:668px;font-size:19px;line-height:24px;color:#217346">Sheet4</div>
<div style="left:518px;top:668px;font-size:19px;line-height:24px;color:#333">1月</div>
<div style="left:575px;top:668px;font-size:19px;line-height:24px;color:#333">3月</div>
<svg width="24" height="14" style="left:656px;top:669px" viewBox="0 0 24 14"><circle cx="12" cy="13" r="10" fill="none" stroke="#7a7a7a" stroke-width="1.2"/></svg>
<svg width="8" height="8" style="left:25px;top:676px" viewBox="0 0 8 8"><polygon points="7,0 7,8 1,4" fill="#444"/></svg>
<svg width="8" height="8" style="left:55px;top:677px" viewBox="0 0 8 8"><polygon points="1,0 1,8 7,4" fill="#999"/></svg>
<div style="left:766px;top:673px;width:2px;height:2px;background:#999"></div>
<div style="left:786px;top:669px;width:25px;height:12px;background:#fdfdfd;border:1px solid #b4b4b4"></div>
<div style="left:810px;top:669px;width:388px;height:12px;background:#fdfdfd;border:1px solid #9c9c9c"></div>
<div style="left:1198px;top:669px;width:36px;height:12px;background:#fbfbfb"></div>
<div style="left:1234px;top:669px;width:25px;height:12px;background:#fdfdfd;border:1px solid #b4b4b4"></div>
</body></html>
